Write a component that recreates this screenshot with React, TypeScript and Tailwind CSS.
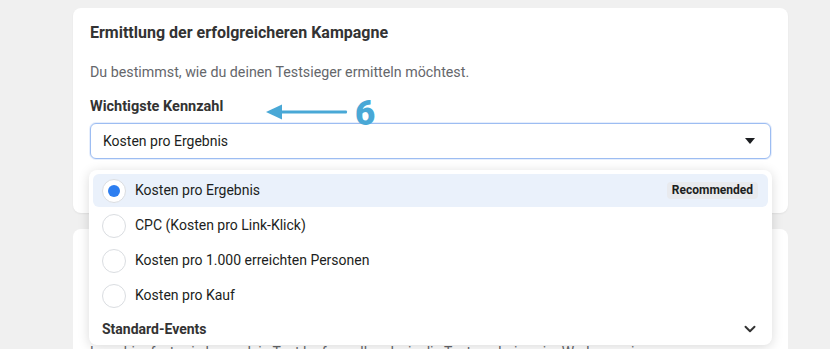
import { ChevronDown } from 'lucide-react';

const options = [
  { label: 'Kosten pro Ergebnis', selected: true, badge: 'Recommended' },
  { label: 'CPC (Kosten pro Link-Klick)' },
  { label: 'Kosten pro 1.000 erreichten Personen' },
  { label: 'Kosten pro Kauf' },
];

function Radio({ checked }: { checked?: boolean }) {
  return (
    <span className="flex h-[24px] w-[24px] shrink-0 items-center justify-center rounded-full border border-[#dadde1] bg-white">
      {checked && <span className="h-[12px] w-[12px] rounded-full bg-[#2d7ef0]" />}
    </span>
  );
}

export default function App() {
  return (
    <div className="relative h-[349px] w-[830px] overflow-hidden bg-[#f0f0f0] font-['Roboto','Liberation_Sans',sans-serif] text-[#1c1e21]">
      <div className="ml-[73px] flex w-[715px] flex-col gap-[16px] pt-[8px]">
        {/* card 1 */}
        <div className="relative h-[205px] rounded-lg bg-white px-[17px] pt-[15px] shadow-[0_1px_2px_rgba(0,0,0,0.06)]">
          <h2 className="text-[16px] font-bold leading-[20px] text-[#333]">Ermittlung der erfolgreicheren Kampagne</h2>
          <p className="mt-[19px] text-[14.25px] leading-[20px] text-[#65676b]">
            Du bestimmst, wie du deinen Testsieger ermitteln möchtest.
          </p>
          <div className="mt-[15px] text-[14.5px] font-bold leading-[20px] text-[#333]">Wichtigste Kennzahl</div>

          {/* annotation */}
          <svg width="82" height="18" viewBox="0 0 82 18" className="absolute left-[193px] top-[95px] text-[#49a8d6]">
            <path d="M0 9 L16 1.5 L16 16.5 Z" fill="currentColor" />
            <rect x="14" y="7.5" width="67" height="3" rx="1" fill="currentColor" />
          </svg>
          <span className="absolute left-[282px] top-[88px] text-[35px] font-black leading-[35px] text-[#49a8d6]">6</span>

          <div className="mt-[6px] flex h-[36px] items-center justify-between rounded-[6px] border border-[#9dbdf2] bg-white pl-[12px] pr-[15px] shadow-[0_0_0_1px_rgba(157,189,242,0.25)]">
            <span className="text-[14px] text-[#1c1e21]">Kosten pro Ergebnis</span>
            <svg width="10" height="6" viewBox="0 0 10 6">
              <path d="M0 0 H10 L5 6 Z" fill="#1c1e21" />
            </svg>
          </div>

          {/* dropdown menu */}
          <div className="absolute left-[16px] top-[162px] z-10 h-[175px] w-[683px] rounded-lg bg-white px-[4px] pt-[4px] shadow-[0_2px_12px_rgba(0,0,0,0.15)]">
            <div className="flex flex-col gap-[2px]">
              {options.map((o) => (
                <div
                  key={o.label}
                  className={`flex h-[33px] items-center rounded-[6px] pl-[9px] pr-[10px] ${o.selected ? 'bg-[#eaf1fb]' : ''}`}
                >
                  <Radio checked={o.selected} />
                  <span className="ml-[9px] flex-1 text-[14px] text-[#1c1e21]">{o.label}</span>
                  {o.badge && (
                    <span className="rounded-[4px] bg-[#e8eaee] px-[5px] py-[1px] text-[12px] font-bold leading-[15px] text-[#1c1e21]">
                      {o.badge}
                    </span>
                  )}
                </div>
              ))}
              <div className="flex h-[30px] items-center justify-between pl-[9px] pr-[9px]">
                <span className="text-[14px] font-bold text-[#333]">Standard-Events</span>
                <ChevronDown size={18} strokeWidth={2.6} className="text-[#333]" />
              </div>
            </div>
          </div>
        </div>

        {/* card 2 */}
        <div className="h-[200px] rounded-lg bg-white px-[17px] pt-[113px]">
          <p className="text-[14px] leading-[20px] text-[#65676b]">
            Lege hier fest, wie lange dein Test laufen soll und wie die Testergebnisse im Werbeanzeigenmanager angezeigt werden.
          </p>
        </div>
      </div>
    </div>
  );
}
